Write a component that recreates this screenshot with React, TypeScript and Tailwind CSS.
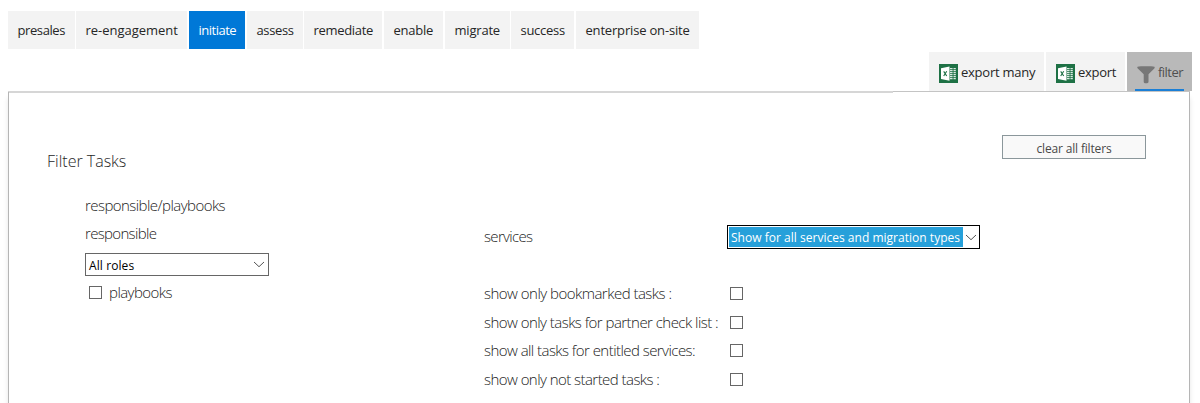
import type { ReactNode } from "react";

function Tab({ className, label, active }: { className: string; label: string; active?: boolean }) {
  return (
    <button
      className={`h-[38px] shrink-0 pt-[2px] pl-[9.5px] text-left text-[13px] whitespace-nowrap ${
        active ? "bg-[#0078d7] text-white" : "bg-[#f3f3f3] text-[#262626]"
      } ${className}`}
    >
      {label}
    </button>
  );
}

function ExcelIcon() {
  return (
    <svg width="19" height="19" viewBox="0 0 19 19" className="mt-[3px] shrink-0">
      <rect width="19" height="19" fill="#1e7145" />
      <path
        d="M11 4.7h2.6M14.5 4.7h2.3M11 6.7h2.6M14.5 6.7h2.3M11 8.7h2.6M14.5 8.7h2.3M11 10.7h2.6M14.5 10.7h2.3M11 12.7h2.6M14.5 12.7h2.3M11 14.7h2.6M14.5 14.7h2.3"
        stroke="#dbe9e1"
        strokeWidth="1.2"
      />
      <path d="M2 4.2 10.5 2.5v14.2L2 15z" fill="#fff" />
      <path d="m4.7 7.4 3 4.6M7.7 7.2 4.7 12" stroke="#1e7145" strokeWidth="1.1" />
    </svg>
  );
}

function FilterIcon() {
  return (
    <svg width="18" height="18" viewBox="0 0 18 18" className="mt-[4px] shrink-0">
      <path
        d="M.6.7C3 .1 15 .1 17.4.7c.5.4.4 1.2-.1 1.8l-5.8 5.8v7.5c0 .9-.6 1.4-1.4 1.4H8c-.8 0-1.3-.5-1.3-1.4V8.3L.8 2.5C.2 1.9.1 1.1.6.7Z"
        fill="#777"
      />
    </svg>
  );
}

function Chevron({ className }: { className: string }) {
  return (
    <svg width="12" height="7" viewBox="0 0 12 7" fill="none" className={className}>
      <path d="m1 1 5 4.7L11 1" stroke="#555" />
    </svg>
  );
}

function Box() {
  return <span role="checkbox" aria-checked="false" className="block h-[13px] w-[13px] shrink-0 border border-[#666] bg-white" />;
}

function Row({ children, className }: { children: ReactNode; className: string }) {
  return (
    <div className={`flex h-[28.6px] items-center justify-between whitespace-nowrap ${className}`}>
      <span className="pb-[1.5px]">{children}</span>
      <Box />
    </div>
  );
}

export default function App() {
  return (
    <div className="flex h-[403px] w-[1200px] flex-col overflow-hidden bg-white pt-[11px] font-['Open_Sans','Noto_Sans',sans-serif]">
      <nav className="flex pl-2">
        <Tab label="presales" className="mr-px w-[67px] tracking-[-0.4px]" />
        <Tab label="re-engagement" className="mr-[2px] w-[111px] tracking-[-0.03px]" />
        <Tab label="initiate" active className="mr-[2px] w-14 tracking-[-0.5px]" />
        <Tab label="assess" className="mr-px w-14 tracking-[-0.35px]" />
        <Tab label="remediate" className="mr-[2px] w-[78px] tracking-[-0.32px]" />
        <Tab label="enable" className="mr-[2px] w-[59px] tracking-[-0.25px]" />
        <Tab label="migrate" className="mr-px w-[65px] tracking-[-0.2px]" />
        <Tab label="success" className="mr-[2px] w-[63px] tracking-[-0.28px]" />
        <Tab label="enterprise on-site" className="w-[123px] tracking-[-0.18px]" />
      </nav>

      <div className="mt-[3px] flex h-[39px] shrink-0 justify-end gap-[2px] pr-2 text-[13px] whitespace-nowrap text-[#262626]">
        <button className="flex w-[115px] items-center gap-[3px] bg-[#f3f3f3] pl-[10px]">
          <ExcelIcon />
          <span className="pt-[2px] tracking-[-0.25px]">export many</span>
        </button>
        <button className="flex w-[79px] items-center gap-[3px] bg-[#f3f3f3] pl-[10px]">
          <ExcelIcon />
          <span className="pt-[2px] tracking-[-0.28px]">export</span>
        </button>
        <button className="flex w-[65px] flex-col items-center bg-[#b9b9b9] text-[#505050]">
          <span className="flex h-[37px] w-[49px] items-center gap-[3px] pt-[4px] pl-[2px]">
            <FilterIcon />
            <span className="tracking-[-0.53px]">filter</span>
          </span>
          <span className="h-[2px] w-[49px] bg-[#1b7fd6]" />
        </button>
      </div>

      <div className="mr-[10px] ml-2 flex shrink-0">
        <span className="h-[2px] w-[885px] bg-[#d6d6d6]" />
        <span className="h-px flex-1 bg-[#c4c4c4]" />
      </div>

      <main className="mr-[10px] ml-2 -mt-px flex-1 border-x border-[#b5b5b5] shadow-[0_6px_5px_rgba(0,0,0,0.1)]">
        <div className="flex h-[99px] justify-between pr-[43px] pl-[38px]">
          <h1 className="mt-[57px] h-6 text-[16px] leading-6 font-light text-[#262626]">Filter Tasks</h1>
          <button className="mt-[43px] h-6 w-36 border border-[#8b979b] bg-[#f9f9f9] pt-[3px] text-[12px] tracking-[-0.17px] text-[#484848]">
            clear all filters
          </button>
        </div>

        <div className="flex pl-[76px] text-[15px] leading-[28px] font-light text-[#222]">
          <section className="w-[399px]">
            <h2 className="h-7 tracking-[-0.55px]">responsible/playbooks</h2>
            <div className="h-7 tracking-[-0.67px]">responsible</div>
            <div className="mt-[6px] flex h-[23px] w-[184px] items-center justify-between border border-[#666] pr-[3px] pl-[3px] text-[12px] font-normal tracking-[0.1px] text-black">
              <span className="pt-[2px]">All roles</span>
              <Chevron className="" />
            </div>
            <div className="mt-[2px] flex h-7 items-center gap-[7px] pl-1 tracking-[-0.55px]">
              <Box />
              <span>playbooks</span>
            </div>
          </section>

          <section className="pt-[34px]">
            <div className="flex h-[24px] items-center">
              <span className="w-[243px] pb-[2px] tracking-[-0.67px]">services</span>
              <div className="flex h-[24px] w-[253px] items-center border border-black p-px text-[12px] font-normal text-white">
                <span className="h-5 w-[234px] bg-[#26a0da] pl-[2px] leading-[21px] tracking-[0.02px] whitespace-nowrap">
                  Show for all services and migration types
                </span>
                <Chevron className="ml-[2px]" />
              </div>
            </div>
            <div className="mt-[30.5px] w-[259px]">
              <Row className="tracking-[-0.52px]">show only bookmarked tasks :</Row>
              <Row className="tracking-[-0.54px]">show only tasks for partner check list :</Row>
              <Row className="tracking-[-0.55px]">show all tasks for entitled services:</Row>
              <Row className="tracking-[-0.55px]">show only not started tasks :</Row>
            </div>
          </section>
        </div>
      </main>
    </div>
  );
}
